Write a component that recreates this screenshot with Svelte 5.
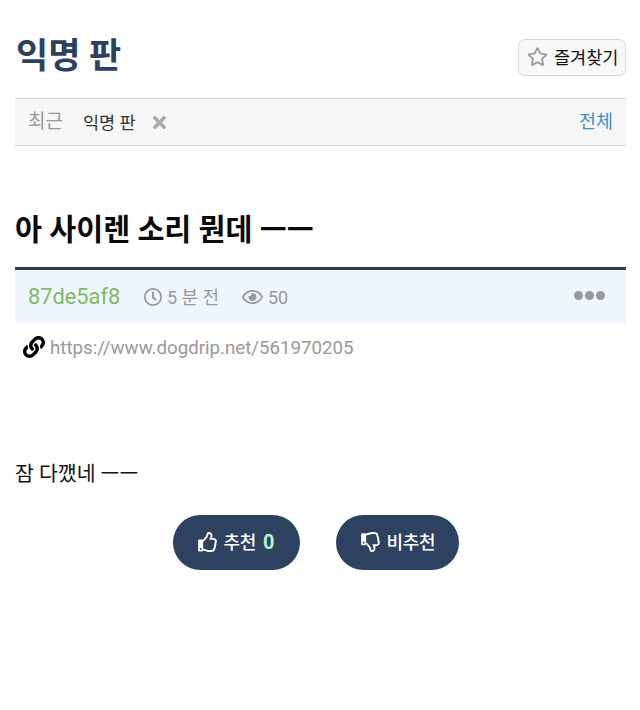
<script>
  const icons = {
    star: ['0 0 576 512', 'M528.1 171.5L382 150.2 316.7 17.8c-11.7-23.6-45.6-23.9-57.4 0L194 150.2 47.9 171.5c-26.2 3.8-36.7 36.1-17.7 54.6l105.7 103-25 145.5c-4.5 26.3 23.2 46 46.4 33.7L288 439.6l130.7 68.7c23.2 12.2 50.9-7.4 46.4-33.7l-25-145.5 105.7-103c19-18.5 8.5-50.8-17.7-54.6zM388.6 312.3l23.7 138.4L288 385.4l-124.3 65.3 23.7-138.4-100.6-98 139-20.2 62.2-126 62.2 126 139 20.2-100.6 98z'],
    times: ['0 80 352 352', 'M242.72 256l100.07-100.07c12.28-12.28 12.28-32.19 0-44.48l-22.24-22.24c-12.28-12.28-32.19-12.28-44.48 0L176 189.28 75.93 89.21c-12.28-12.28-32.19-12.28-44.48 0L9.21 111.45c-12.28 12.28-12.28 32.19 0 44.48L109.28 256 9.21 356.07c-12.28 12.28-12.28 32.19 0 44.48l22.24 22.24c12.28 12.28 32.2 12.28 44.48 0L176 322.72l100.07 100.07c12.28 12.28 32.2 12.28 44.48 0l22.24-22.24c12.28-12.28 12.28-32.19 0-44.48L242.72 256z'],
    clock: ['8 8 496 496', 'M256 8C119 8 8 119 8 256s111 248 248 248 248-111 248-248S393 8 256 8zm0 448c-110.5 0-200-89.5-200-200S145.5 56 256 56s200 89.5 200 200-89.5 200-200 200zm61.8-104.4l-84.9-61.7c-3.1-2.3-4.9-5.9-4.9-9.7V116c0-6.6 5.4-12 12-12h32c6.6 0 12 5.4 12 12v141.7l66.8 48.6c5.4 3.9 6.5 11.4 2.6 16.8L334.6 349c-3.9 5.3-11.4 6.5-16.8 2.6z'],
    eye: ['0 64 576 384', 'M288 144a110.94 110.94 0 0 0-31.24 5 55.4 55.4 0 0 1 7.24 27 56 56 0 0 1-56 56 55.4 55.4 0 0 1-27-7.24A111.71 111.71 0 1 0 288 144zm284.52 97.4C518.29 135.59 410.93 64 288 64S57.68 135.64 3.48 241.41a32.35 32.35 0 0 0 0 29.19C57.71 376.41 165.07 448 288 448s230.32-71.64 284.52-177.41a32.35 32.35 0 0 0 0-29.19zM288 400c-98.65 0-189.09-55-237.93-144C98.91 167 189.34 112 288 112s189.09 55 237.93 144C477.1 345 386.66 400 288 400z'],
    link: ['0 0 512 512', 'M326.612 185.391c59.747 59.809 58.927 155.698.36 214.59-.11.12-.24.25-.36.37l-67.2 67.2c-59.27 59.27-155.699 59.262-214.96 0-59.27-59.26-59.27-155.7 0-214.96l37.106-37.106c9.84-9.84 26.786-3.3 27.294 10.606.648 17.722 3.826 35.527 9.69 52.721 1.986 5.822.567 12.262-3.783 16.612l-13.087 13.087c-28.026 28.026-28.905 73.66-1.155 101.96 28.024 28.579 74.086 28.749 102.325.51l67.2-67.19c28.191-28.191 28.073-73.757 0-101.83-3.701-3.694-7.429-6.564-10.341-8.569a16.037 16.037 0 0 1-6.947-12.606c-.396-10.567 3.348-21.456 11.698-29.806l21.054-21.055c5.521-5.521 14.182-6.199 20.584-1.731a152.482 152.482 0 0 1 20.522 17.197zM467.547 44.449c-59.261-59.262-155.69-59.27-214.96 0l-67.2 67.2c-.12.12-.25.25-.36.37-58.566 58.892-59.387 154.781.36 214.59a152.454 152.454 0 0 0 20.521 17.196c6.402 4.468 15.064 3.789 20.584-1.731l21.054-21.055c8.35-8.35 12.094-19.239 11.698-29.806a16.037 16.037 0 0 0-6.947-12.606c-2.912-2.005-6.64-4.875-10.341-8.569-28.073-28.073-28.191-73.639 0-101.83l67.2-67.19c28.239-28.239 74.3-28.069 102.325.51 27.75 28.3 26.872 73.934-1.155 101.96l-13.087 13.087c-4.35 4.35-5.769 10.79-3.783 16.612 5.864 17.194 9.042 34.999 9.69 52.721.509 13.906 17.454 20.446 27.294 10.606l37.106-37.106c59.271-59.259 59.271-155.699.001-214.959z'],
    up: ['0 0 480 512', 'M466.27 286.69C475.04 271.84 480 256 480 236.85c0-44.015-37.218-85.58-85.82-85.58H357.7c4.92-12.81 8.85-28.13 8.85-46.54C366.55 31.936 328.86 0 271.28 0c-61.607 0-58.093 94.933-71.76 108.6-22.747 22.747-49.615 66.447-68.76 83.4H32c-17.673 0-32 14.327-32 32v240c0 17.673 14.327 32 32 32h64c14.893 0 27.408-10.174 30.978-23.95 44.509 1.001 75.06 39.94 177.802 39.94 7.22 0 15.22.01 22.22.01 77.117 0 111.986-39.423 112.94-95.33 13.319-18.425 20.299-43.122 17.34-66.99 9.854-18.452 13.664-40.343 8.99-62.99zm-61.75 53.83c12.56 21.13 1.26 49.41-13.94 57.57 7.7 48.78-17.608 65.9-53.12 65.9h-37.82c-71.639 0-118.029-37.82-171.64-37.82V240h10.92c28.36 0 67.98-70.89 94.54-97.46 28.36-28.36 18.91-75.63 37.82-94.54 47.27 0 47.27 32.98 47.27 56.73 0 39.17-28.36 56.72-28.36 94.54h103.99c21.11 0 37.73 18.91 37.82 37.82.09 18.9-12.82 37.81-22.27 37.81 13.489 14.555 16.371 45.236-5.21 65.62zM88 432c0 13.255-10.745 24-24 24s-24-10.745-24-24 10.745-24 24-24 24 10.745 24 24z'],
    down: ['0 0 480 512', 'M466.27 225.31c4.674-22.647.864-44.538-8.99-62.99 2.958-23.868-4.021-48.565-17.34-66.99C438.986 39.423 404.117 0 327 0c-7 0-15 .01-22.22.01C201.195.01 168.997 40 128 40h-10.845c-5.64-4.975-13.042-8-21.155-8H32C14.327 32 0 46.327 0 64v240c0 17.673 14.327 32 32 32h64c11.842 0 22.175-6.438 27.708-16h7.052c19.146 16.953 46.013 60.653 68.76 83.4 13.667 13.667 10.153 108.6 71.76 108.6 57.58 0 95.27-31.936 95.27-104.73 0-18.41-3.93-33.73-8.85-46.54h36.48c48.602 0 85.82-41.565 85.82-85.58 0-19.15-4.96-34.99-13.73-49.84zM64 296c-13.255 0-24-10.745-24-24s10.745-24 24-24 24 10.745 24 24-10.745 24-24 24zm330.18 16.73H290.19c0 37.82 28.36 55.37 28.36 94.54 0 23.75 0 56.73-47.27 56.73-18.91-18.91-9.46-66.18-37.82-94.54C206.9 342.89 167.28 272 138.92 272H128V85.83c53.611 0 100.001-37.82 171.64-37.82h37.82c35.512 0 60.82 17.12 53.12 65.9 15.2 8.16 26.5 36.44 13.94 57.57 21.581 20.384 18.699 51.065 5.21 65.62 9.45 0 22.36 18.91 22.27 37.81-.09 18.91-16.71 37.82-37.82 37.82z'],
  };
</script>

{#snippet icon(name, cls)}
  <svg class="icon {cls}" viewBox={icons[name][0]} aria-hidden="true"><path d={icons[name][1]} /></svg>
{/snippet}

<main>
  <header>
    <h1>익명 판</h1>
    <button class="favorite">{@render icon('star', 'star')}<span>즐겨찾기</span></button>
  </header>

  <nav>
    <span class="recent">최근</span>
    <span class="board">익명 판</span>
    {@render icon('times', 'times')}
    <a class="all" href="#all">전체</a>
  </nav>

  <article>
    <h2>아 사이렌 소리 뭔데 ㅡㅡ</h2>
    <div class="meta">
      <span class="author">87de5af8</span>
      {@render icon('clock', 'clock')}
      <span class="time">5 분 전</span>
      {@render icon('eye', 'eye')}
      <span class="views">50</span>
      <span class="more"><i></i><i></i><i></i></span>
    </div>
    <div class="link">
      {@render icon('link', 'chain')}
      <span>https://www.dogdrip.net/561970205</span>
    </div>
    <p>잠 다깼네 ㅡㅡ</p>
    <div class="votes">
      <button class="vote up">{@render icon('up', 'thumb')}<span>추천</span><b>0</b></button>
      <button class="vote down">{@render icon('down', 'thumb')}<span>비추천</span></button>
    </div>
  </article>
</main>

<style>
  :global(body) {
    margin: 0;
    background: #fff;
  }
  main {
    box-sizing: border-box;
    height: 710px;
    padding: 32px 14px 0 15px;
    font-family: Roboto, 'Noto Sans CJK KR', sans-serif;
    color: #111;
    white-space: nowrap;
    overflow: hidden;
  }
  .icon {
    display: block;
    flex: none;
    fill: currentColor;
  }
  header {
    display: flex;
    justify-content: space-between;
    height: 66px;
  }
  h1 {
    margin: 3px 0 0 1px;
    font-size: 35px;
    line-height: 44px;
    font-weight: 700;
    color: #2c4160;
  }
  button {
    margin: 0;
    font-family: inherit;
  }
  .favorite {
    display: flex;
    align-items: center;
    box-sizing: border-box;
    width: 108px;
    height: 37px;
    margin-top: 7px;
    padding: 0 0 0 8px;
    border: 1px solid #d9d9d9;
    border-radius: 7px;
    background: #f8f8f8;
    font-size: 17.5px;
    color: #111;
  }
  .favorite span {
    margin-top: -2px;
  }
  .star {
    width: 21px;
    height: 19px;
    margin: -2px 6px 0 0;
    color: #999;
  }
  nav {
    display: flex;
    align-items: center;
    box-sizing: border-box;
    height: 48px;
    padding: 0 13px;
    border-top: 1px solid #d8d8d8;
    border-bottom: 1px solid #d8d8d8;
    background: #f6f6f6;
  }
  .recent {
    width: 55px;
    font-size: 19px;
    line-height: 28px;
    margin-top: -1px;
    color: #999;
  }
  .board {
    width: 70px;
    margin-top: -2px;
    font-size: 17.5px;
    color: #333;
  }
  .times {
    width: 13px;
    height: 13px;
    color: #aaa;
  }
  .all {
    margin: -5px 0 0 auto;
    font-size: 18.5px;
    color: #3d8fc9;
    text-decoration: none;
  }
  h2 {
    margin: 63px 0 0;
    height: 58px;
    font-size: 29.3px;
    line-height: 43px;
    font-weight: 700;
    color: #0a0a0a;
  }
  .meta {
    display: flex;
    align-items: center;
    box-sizing: border-box;
    height: 56px;
    padding: 1px 20px 0 13px;
    border-top: 3px solid #2e3e52;
    background: #eff6fe;
    font-size: 18px;
    color: #999;
  }
  .author {
    width: 116px;
    margin-top: -2px;
    font-size: 21.8px;
    color: #7fb866;
  }
  .clock {
    width: 18px;
    height: 18px;
    margin-right: 5px;
  }
  .time {
    width: 75px;
    margin-top: -3px;
  }
  .eye {
    width: 21px;
    height: 14px;
    margin-right: 5px;
  }
  .more {
    display: flex;
    gap: 2px;
    margin: -4px 1px 0 auto;
  }
  .more i {
    width: 9px;
    height: 9px;
    border-radius: 50%;
    background: #999;
  }
  .link {
    display: flex;
    align-items: center;
    height: 50px;
    padding-left: 8px;
    font-size: 18.7px;
    color: #999;
  }
  .chain {
    width: 22px;
    height: 22px;
    margin: -3px 5px 0 0;
    color: #000;
  }
  p {
    margin: 86px 0 0;
    font-size: 20.5px;
    line-height: 30px;
  }
  .votes {
    display: flex;
    justify-content: center;
    gap: 36px;
    margin: 26px 10px 0 0;
  }
  .vote {
    display: flex;
    align-items: center;
    box-sizing: border-box;
    height: 55px;
    padding: 0 0 2px 25px;
    border: 0;
    border-radius: 28px;
    background: #2d4161;
    color: #fff;
    font-size: 18px;
    font-weight: 500;
  }
  .vote span {
    margin-top: -2px;
    letter-spacing: -0.3px;
  }
  .up {
    width: 127px;
  }
  .down {
    width: 123px;
  }
  .thumb {
    width: 19px;
    height: 20px;
    margin-right: 7px;
  }
  .vote b {
    margin-left: 7px;
    font-size: 20px;
    color: #b0f5c5;
  }
</style>
